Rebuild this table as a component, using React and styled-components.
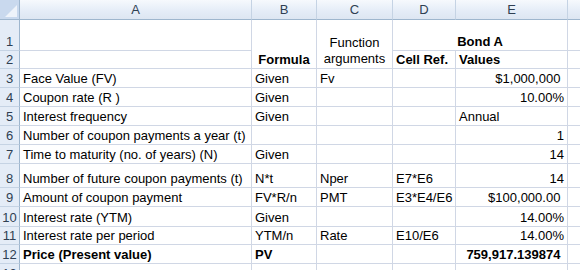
import React from 'react';
import styled, {createGlobalStyle} from 'styled-components';

const GlobalStyle = createGlobalStyle`
  html, body {
    margin: 0;
    padding: 0;
    background: #fff;
    overflow: hidden;
  }
  body {
    font-family: "Liberation Sans", Arial, sans-serif;
  }
`;

const COLS = ['A', 'B', 'C', 'D', 'E', ''];
const ROW_HEIGHTS = [31, 18, 19, 19, 19, 19, 19, 24, 19, 20, 18, 19, 19];

// merged cells use rs (row span) / cs (col span)
const CELLS = [
    {r: 1, c: 2, rs: 2, text: 'Formula', bold: true, align: 'center'},
    {r: 1, c: 3, rs: 2, text: ['Function', 'arguments'], align: 'center'},
    {r: 1, c: 4, cs: 2, text: 'Bond A', bold: true, align: 'center'},
    {r: 2, c: 4, text: 'Cell Ref.', bold: true},
    {r: 2, c: 5, text: 'Values', bold: true},
    {r: 3, c: 1, text: 'Face Value (FV)'},
    {r: 3, c: 2, text: 'Given'},
    {r: 3, c: 3, text: 'Fv'},
    {r: 3, c: 5, text: '$1,000,000 ', align: 'right'},
    {r: 4, c: 1, text: 'Coupon rate (R )'},
    {r: 4, c: 2, text: 'Given'},
    {r: 4, c: 5, text: '10.00%', align: 'right'},
    {r: 5, c: 1, text: 'Interest frequency'},
    {r: 5, c: 2, text: 'Given'},
    {r: 5, c: 5, text: 'Annual'},
    {r: 6, c: 1, text: 'Number of coupon payments a year (t)'},
    {r: 6, c: 5, text: '1', align: 'right'},
    {r: 7, c: 1, text: 'Time to maturity (no. of years) (N)'},
    {r: 7, c: 2, text: 'Given'},
    {r: 7, c: 5, text: '14', align: 'right'},
    {r: 8, c: 1, text: 'Number of future coupon payments (t)'},
    {r: 8, c: 2, text: 'N*t'},
    {r: 8, c: 3, text: 'Nper'},
    {r: 8, c: 4, text: 'E7*E6'},
    {r: 8, c: 5, text: '14', align: 'right'},
    {r: 9, c: 1, text: 'Amount of coupon payment'},
    {r: 9, c: 2, text: 'FV*R/n'},
    {r: 9, c: 3, text: 'PMT'},
    {r: 9, c: 4, text: 'E3*E4/E6'},
    {r: 9, c: 5, text: '$100,000.00 ', align: 'right'},
    {r: 10, c: 1, text: 'Interest rate (YTM)'},
    {r: 10, c: 2, text: 'Given'},
    {r: 10, c: 5, text: '14.00%', align: 'right'},
    {r: 11, c: 1, text: 'Interest rate per period'},
    {r: 11, c: 2, text: 'YTM/n'},
    {r: 11, c: 3, text: 'Rate'},
    {r: 11, c: 4, text: 'E10/E6'},
    {r: 11, c: 5, text: '14.00%', align: 'right'},
    {r: 12, c: 1, text: 'Price (Present value)', bold: true},
    {r: 12, c: 2, text: 'PV', bold: true},
    {r: 12, c: 5, text: '759,917.139874 ', bold: true, align: 'right'},
];

const Sheet = () => {
    const covered = new Set();
    CELLS.forEach((cell) => {
        for (let i = 0; i < (cell.rs || 1); i++) {
            for (let j = 0; j < (cell.cs || 1); j++) {
                covered.add(`${cell.r + i}-${cell.c + j}`);
            }
        }
    });
    const blanks = [];
    ROW_HEIGHTS.forEach((h, i) => {
        for (let c = 1; c <= 6; c++) {
            if (!covered.has(`${i + 1}-${c}`)) blanks.push({r: i + 1, c});
        }
    });
    return (
        <Grid>
            <Corner><CornerMark /></Corner>
            {COLS.map((col, i) => (
                <ColHead key={col + i} $col={i + 2}>{col}</ColHead>
            ))}
            {ROW_HEIGHTS.map((h, i) => (
                <RowHead key={i} $row={i + 2}>{i + 1}</RowHead>
            ))}
            {blanks.map((b) => (
                <Cell key={`b${b.r}-${b.c}`} $row={b.r + 1} $col={b.c + 1} />
            ))}
            {CELLS.map((cell) => (
                <Cell
                    key={`${cell.r}-${cell.c}`}
                    $row={cell.r + 1}
                    $col={cell.c + 1}
                    $rs={cell.rs}
                    $cs={cell.cs}
                    $bold={cell.bold}
                    $align={cell.align}
                >
                    {Array.isArray(cell.text)
                        ? <Wrapped>{cell.text.map((t) => <span key={t}>{t}</span>)}</Wrapped>
                        : cell.text}
                </Cell>
            ))}
        </Grid>
    );
};

const Grid = styled.div`
    display: grid;
    grid-template-columns: 20px 232px 65px 76px 63px 112px 40px;
    grid-template-rows: 20px ${ROW_HEIGHTS.map((h) => h + 'px').join(' ')};
    font-size: 13px;
    color: #000;
`;

const Corner = styled.div`
    grid-row: 1;
    grid-column: 1;
    box-sizing: border-box;
    background: #c9d9ee;
    border-right: 1px solid #9eb6ce;
    border-bottom: 1px solid #9eb6ce;
    position: relative;
`;

const CornerMark = styled.div`
    position: absolute;
    right: 2px;
    bottom: 2px;
    width: 0;
    height: 0;
    border-left: 12px solid transparent;
    border-bottom: 12px solid #eef3fa;
`;

const ColHead = styled.div`
    grid-row: 1;
    grid-column: ${(p) => p.$col};
    box-sizing: border-box;
    background: linear-gradient(#f6f9fd, #e4ecf7 60%, #dde6f2);
    border-right: 1px solid #c5d3e4;
    border-bottom: 1px solid #9eb6ce;
    display: flex;
    align-items: center;
    justify-content: center;
    color: #2f3f53;
    font-size: 13px;
`;

const RowHead = styled.div`
    grid-column: 1;
    grid-row: ${(p) => p.$row};
    box-sizing: border-box;
    background: #e4ecf7;
    border-right: 1px solid #9eb6ce;
    border-bottom: 1px solid #c5d3e4;
    display: flex;
    align-items: flex-end;
    justify-content: center;
    padding-bottom: 1px;
    color: #2f3f53;
    font-size: 13px;
`;

const Cell = styled.div`
    grid-row: ${(p) => p.$row} / span ${(p) => p.$rs || 1};
    grid-column: ${(p) => p.$col} / span ${(p) => p.$cs || 1};
    box-sizing: border-box;
    border-right: 1px solid #d0d7e5;
    border-bottom: 1px solid #d0d7e5;
    display: flex;
    align-items: flex-end;
    justify-content: ${(p) => p.$align === 'right' ? 'flex-end' : p.$align === 'center' ? 'center' : 'flex-start'};
    padding: 0 3px 1px 3px;
    font-weight: ${(p) => p.$bold ? 700 : 400};
    white-space: pre;
    overflow: hidden;
`;

const Wrapped = styled.div`
    display: flex;
    flex-direction: column;
    align-items: center;
    line-height: 16px;
`;

const App = () => (
    <>
        <GlobalStyle />
        <Sheet />
    </>
);

export default App;
